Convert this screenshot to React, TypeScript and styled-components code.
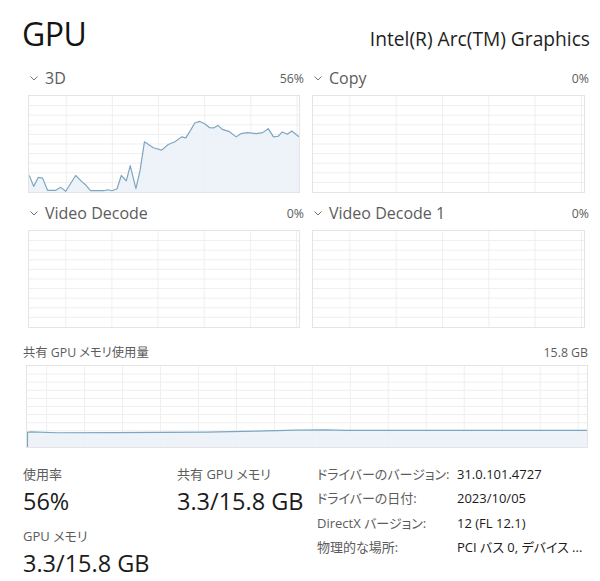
import React from "react";
import styled, { createGlobalStyle } from "styled-components";

const GlobalStyle = createGlobalStyle`
  html, body { margin: 0; padding: 0; background: #ffffff; }
  body {
    font-family: "Open Sans", "Noto Sans CJK JP", sans-serif;
    color: #1b1b1b;
    font-feature-settings: "palt";
  }
  * { box-sizing: border-box; }
`;

const Page = styled.div`
  width: 600px;
  height: 581px;
  padding: 0 12px 0 22px;
  overflow: hidden;
  background: #fff;
`;

const Header = styled.header`
  display: flex;
  justify-content: space-between;
  align-items: baseline;
  padding-top: 14px;
  height: 67px;
`;

const Title = styled.h1`
  margin: 0;
  font-size: 32px;
  font-weight: 400;
  line-height: 40px;
  letter-spacing: -0.5px;
  color: #141414;
`;

const Adapter = styled.div`
  font-size: 19.2px;
  line-height: 24px;
  margin-right: -2px;
  color: #1e1e1e;
`;

const EngineGrid = styled.div`
  display: grid;
  grid-template-columns: 276px 277px;
  column-gap: 8px;
  row-gap: 9px;
  margin-left: 6px;
`;

const EnginePanel = styled.section`
  display: flex;
  flex-direction: column;
`;

const PanelHeader = styled.div`
  display: flex;
  align-items: center;
  height: 22px;
  padding-left: 2px;
  margin-bottom: 6px;
`;

const Chevron = styled.svg`
  width: 8px;
  height: 5px;
  margin-right: 7px;
  flex: none;
`;

const EngineName = styled.span`
  font-size: 16px;
  color: #5c5c5c;
`;

const Percent = styled.span`
  margin-left: auto;
  font-size: 12.3px;
  color: #5c5c5c;
`;

const ChartBox = styled.div<{ $h: number }>`
  height: ${(p) => p.$h}px;
  margin-right: 4px;
  border: 1px solid #e4e4e4;
  background: #fff;
  svg { display: block; width: 100%; height: 100%; }
`;

const MemorySection = styled.section`
  margin-top: 16px;
  margin-left: 1px;
`;

const MemoryHeader = styled.div`
  display: flex;
  justify-content: space-between;
  font-size: 12.3px;
  line-height: 18px;
  color: #5c5c5c;
  margin-bottom: 3px;
`;

const MemoryChart = styled(ChartBox)`
  margin-left: 3px;
  margin-right: 0;
`;

const Stats = styled.div`
  display: flex;
  margin-top: 17px;
  margin-left: 1px;
`;

const UsageGrid = styled.div`
  display: grid;
  grid-template-columns: 154px 140px;
  grid-auto-rows: 54px;
  row-gap: 8px;
`;

const StatBlock = styled.div`
  display: flex;
  flex-direction: column;
`;

const StatLabel = styled.span`
  font-size: 13px;
  line-height: 18px;
  height: 18px;
  color: #5c5c5c;
`;

const StatValue = styled.span`
  font-size: 23.5px;
  line-height: 36px;
  height: 36px;
  color: #1b1b1b;
  white-space: nowrap;
`;

const InfoTable = styled.dl`
  display: grid;
  grid-template-columns: 140px auto;
  grid-auto-rows: 24.3px;
  margin: -3px 0 0 0;
  font-size: 13px;
  line-height: 24px;
`;

const InfoKey = styled.dt`
  color: #5c5c5c;
  margin: 0;
  white-space: nowrap;
`;

const InfoValue = styled.dd`
  color: #1b1b1b;
  margin: 0;
  white-space: nowrap;
`;

const LINE = "#7ea6c0";
const FILL = "#eaf1f8";
const GRID = "#efefef";

function GridLines({ w, h, rows, offset, step }: { w: number; h: number; rows: number; offset: number; step: number }) {
  const lines: React.ReactNode[] = [];
  for (let i = 1; i < rows; i++) {
    const y = (h / rows) * i;
    lines.push(<line key={"h" + i} x1={0} x2={w} y1={y} y2={y} stroke={GRID} strokeWidth={1} />);
  }
  for (let x = offset; x < w; x += step) {
    lines.push(<line key={"v" + x} x1={x} x2={x} y1={0} y2={h} stroke={GRID} strokeWidth={1} />);
  }
  return <g>{lines}</g>;
}

const d3: [number, number][] = [
  [28.3, 175.3], [32.7, 186.3], [37.3, 177.3], [41.7, 178], [46.7, 190.3], [55, 190.3], [60, 187.3],
  [65, 191.3], [75, 175.3], [81.7, 182], [85, 184.7], [90, 190.7], [103.3, 190.7], [107.3, 189.7],
  [111.7, 190.7], [116.7, 188.7], [121, 175.3], [126, 180.7], [130, 165.3], [135.7, 188.7],
  [140, 169.7], [144.3, 141.3], [153.3, 147.3], [161.7, 149.7], [168.3, 144], [175, 141.3],
  [181.7, 136.3], [186, 137.3], [190.7, 129.7], [195, 122.3], [200, 120.7], [205, 123], [210, 127],
  [214, 127.3], [218.3, 124.7], [222.7, 128.7], [229.3, 130.7], [236.7, 136.3], [241.7, 133],
  [248.3, 132], [256.7, 133], [263.3, 132], [269, 128], [274.3, 136.3], [279, 135.7], [283.3, 131.3],
  [288.3, 133.7], [292.7, 130.3], [300, 136.3],
];

function Chart3D() {
  const w = 272, h = 97;
  const pts = d3.map(([x, y]) => [x - 28, y - 95] as [number, number]);
  const line = pts.map(([x, y]) => `${x},${y}`).join(" ");
  const area = `0,${h} ${line} ${w},${h}`;
  return (
    <svg viewBox={`0 0 ${w} ${h}`} preserveAspectRatio="none">
      <GridLines w={w} h={h} rows={10} offset={37.5} step={46.5} />
      <polygon points={area} fill={FILL} opacity={0.85} />
      <polyline points={line} fill="none" stroke={LINE} strokeWidth={1.2} strokeLinejoin="round" />
    </svg>
  );
}

function EmptyChart() {
  const w = 272, h = 97;
  return (
    <svg viewBox={`0 0 ${w} ${h}`} preserveAspectRatio="none">
      <GridLines w={w} h={h} rows={10} offset={37} step={46.5} />
    </svg>
  );
}

function MemoryGraph() {
  const w = 562, h = 82;
  const pts: [number, number][] = [
    [0.5, 82], [0.5, 67], [4, 66.6], [30, 67.6], [90, 67.4], [180, 66.9], [230, 66], [270, 65],
    [300, 64.6], [320, 65.1], [400, 65.2], [562, 65.2],
  ];
  const line = pts.map(([x, y]) => `${x},${y}`).join(" ");
  const area = `${line} ${w},${h}`;
  return (
    <svg viewBox={`0 0 ${w} ${h}`} preserveAspectRatio="none">
      <GridLines w={w} h={h} rows={10} offset={19.7} step={38.1} />
      <polygon points={area} fill={FILL} opacity={0.85} />
      <polyline points={line} fill="none" stroke={LINE} strokeWidth={1.2} />
    </svg>
  );
}

function Panel({ name, pct, children }: { name: string; pct: string; children: React.ReactNode }) {
  return (
    <EnginePanel>
      <PanelHeader>
        <Chevron viewBox="0 0 8 5">
          <polyline points="0.5,0.5 4,4 7.5,0.5" fill="none" stroke="#777" strokeWidth={1} />
        </Chevron>
        <EngineName>{name}</EngineName>
        <Percent>{pct}</Percent>
      </PanelHeader>
      <ChartBox $h={98}>{children}</ChartBox>
    </EnginePanel>
  );
}

export default function App() {
  return (
    <>
      <GlobalStyle />
      <Page>
        <Header>
          <Title>GPU</Title>
          <Adapter>Intel(R) Arc(TM) Graphics</Adapter>
        </Header>
        <EngineGrid>
          <Panel name="3D" pct="56%"><Chart3D /></Panel>
          <Panel name="Copy" pct="0%"><EmptyChart /></Panel>
          <Panel name="Video Decode" pct="0%"><EmptyChart /></Panel>
          <Panel name="Video Decode 1" pct="0%"><EmptyChart /></Panel>
        </EngineGrid>
        <MemorySection>
          <MemoryHeader>
            <span>共有 GPU メモリ使用量</span>
            <span>15.8 GB</span>
          </MemoryHeader>
          <MemoryChart $h={83}><MemoryGraph /></MemoryChart>
        </MemorySection>
        <Stats>
          <UsageGrid>
            <StatBlock>
              <StatLabel>使用率</StatLabel>
              <StatValue>56%</StatValue>
            </StatBlock>
            <StatBlock>
              <StatLabel>共有 GPU メモリ</StatLabel>
              <StatValue>3.3/15.8 GB</StatValue>
            </StatBlock>
            <StatBlock>
              <StatLabel>GPU メモリ</StatLabel>
              <StatValue>3.3/15.8 GB</StatValue>
            </StatBlock>
          </UsageGrid>
          <InfoTable>
            <InfoKey>ドライバーのバージョン:</InfoKey>
            <InfoValue>31.0.101.4727</InfoValue>
            <InfoKey>ドライバーの日付:</InfoKey>
            <InfoValue>2023/10/05</InfoValue>
            <InfoKey>DirectX バージョン:</InfoKey>
            <InfoValue>12 (FL 12.1)</InfoValue>
            <InfoKey>物理的な場所:</InfoKey>
            <InfoValue>PCI バス 0, デバイス ...</InfoValue>
          </InfoTable>
        </Stats>
      </Page>
    </>
  );
}
